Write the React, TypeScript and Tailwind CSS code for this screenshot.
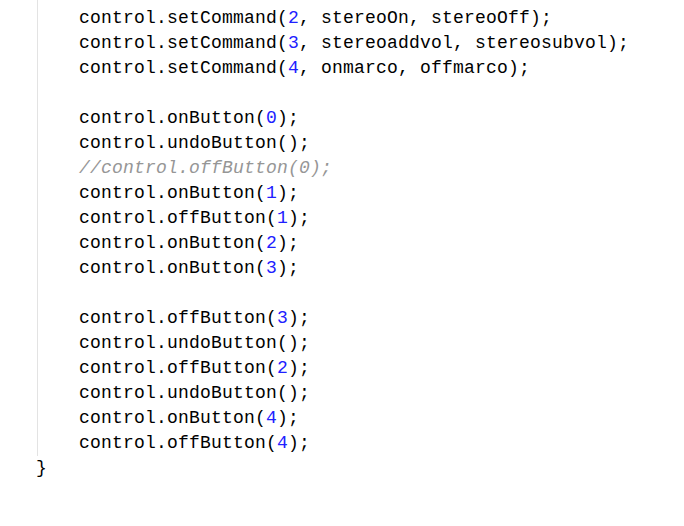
import React from "react";

type Tok = { t: string; c?: "n" | "cm" };

const N = (t: string): Tok => ({ t, c: "n" });
const T = (t: string): Tok => ({ t });

const lines: (Tok[] | null)[] = [
  [T("control.setCommand("), N("1"), T(", livingOn, garageOff);")],
  [T("control.setCommand("), N("2"), T(", stereoOn, stereoOff);")],
  [T("control.setCommand("), N("3"), T(", stereoaddvol, stereosubvol);")],
  [T("control.setCommand("), N("4"), T(", onmarco, offmarco);")],
  null,
  [T("control.onButton("), N("0"), T(");")],
  [T("control.undoButton();")],
  [{ t: "//control.offButton(0);", c: "cm" }],
  [T("control.onButton("), N("1"), T(");")],
  [T("control.offButton("), N("1"), T(");")],
  [T("control.onButton("), N("2"), T(");")],
  [T("control.onButton("), N("3"), T(");")],
  null,
  [T("control.offButton("), N("3"), T(");")],
  [T("control.undoButton();")],
  [T("control.offButton("), N("2"), T(");")],
  [T("control.undoButton();")],
  [T("control.onButton("), N("4"), T(");")],
  [T("control.offButton("), N("4"), T(");")],
];

function Line({ toks, first }: { toks: Tok[] | null; first?: boolean }) {
  return (
    <div
      className={
        first
          ? "h-[25px] leading-[17px] whitespace-pre"
          : "h-[25px] whitespace-pre"
      }
    >
      {toks
        ? toks.map((k, i) =>
            k.c === "n" ? (
              <span key={i} className="text-[#2020ff]">
                {k.t}
              </span>
            ) : k.c === "cm" ? (
              <span key={i} className="text-[#969696] italic">
                {k.t}
              </span>
            ) : (
              <span key={i}>{k.t}</span>
            )
          )
        : " "}
    </div>
  );
}

export default function App() {
  return (
    <div
      className="w-[684px] h-[526px] bg-white overflow-hidden text-black text-[18px] leading-[25px] tracking-[0.2px]"
      style={{ fontFamily: '"Liberation Mono", "Courier New", monospace' }}
    >
      <div className="-mt-[19px]">
        <div className="ml-[37px] border-l border-[#e3e3e3] pl-[41px]">
          {lines.map((l, i) => (
            <Line key={i} toks={l} first={i === 0} />
          ))}
        </div>
        <div className="h-[25px] pl-[36px] whitespace-pre">{"}"}</div>
      </div>
    </div>
  );
}
